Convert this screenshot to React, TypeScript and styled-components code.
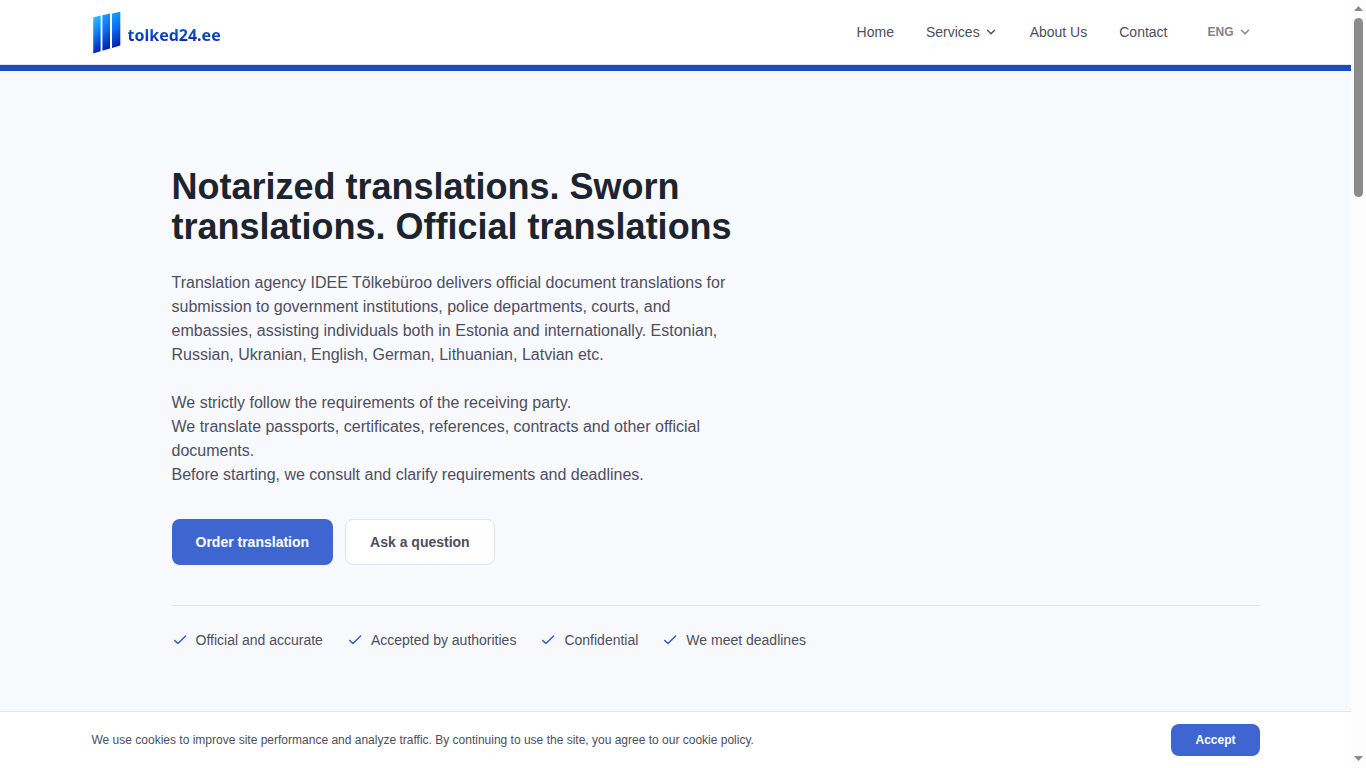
import React from "react";
import styled, { createGlobalStyle, css } from "styled-components";

const GlobalStyle = createGlobalStyle`
  *, *::before, *::after { box-sizing: border-box; }
  body {
    margin: 0;
    background: #f8f9fd;
    color: #4e4e5d;
    font-family: "Liberation Sans", Arial, sans-serif;
    font-size: 16px;
    line-height: 24px;
  }
  h1, p, ul { margin: 0; padding: 0; }
  ul { list-style: none; }
  a { color: inherit; text-decoration: none; }
  button { font-family: inherit; cursor: pointer; }
`;

const Viewport = styled.div`
  display: grid;
  grid-template-columns: minmax(0, 1fr) 15px;
  height: 100vh;
  overflow: hidden;
`;

const Page = styled.div`
  display: flex;
  flex-direction: column;
  min-height: 0;
`;

const Container = styled.div`
  width: 100%;
  max-width: 1200px;
  margin: 0 auto;
  padding: 0 16px;
`;

const Header = styled.header`
  flex: none;
  background: #fff;
  border-bottom: 6px solid #1e4bbf;
`;

const HeaderInner = styled.div`
  border-bottom: 1px solid #e1e3ec;
`;

const HeaderRow = styled(Container)`
  display: flex;
  align-items: center;
  justify-content: space-between;
  height: 64px;
`;

const Logo = styled.a`
  display: flex;
  align-items: center;
  gap: 6px;
`;

const LogoText = styled.span`
  font-family: "Noto Sans", sans-serif;
  font-size: 16px;
  line-height: 24px;
  font-weight: 700;
  padding-top: 6px;
  color: transparent;
  background: linear-gradient(#0e62e2 35%, #0828a4 85%);
  background-clip: text;
`;

const Nav = styled.nav`
  display: flex;
  align-items: center;
  gap: 32px;
  font-size: 14px;
  line-height: 20px;
`;

const navItem = css`
  display: flex;
  align-items: center;
  padding: 0;
  border: 0;
  background: none;
  color: inherit;
`;

const NavLink = styled.a`
  ${navItem}
`;

const NavButton = styled.button`
  ${navItem}
  gap: 4px;
  font-size: 14px;
  line-height: 20px;
`;

const LanguageButton = styled.button`
  ${navItem}
  gap: 4px;
  padding: 0 8px;
  color: #808290;
  font-size: 12px;
  line-height: 16px;
  font-weight: 700;
`;

const Hero = styled.main`
  flex: 1;
  min-height: 0;
  overflow: hidden;
  padding: 96px 0;
`;

const HeroContent = styled.div`
  padding-left: 80px;
`;

const Title = styled.h1`
  max-width: 576px;
  color: #1c2430;
  font-size: 36px;
  line-height: 40px;
  font-weight: 700;
`;

const Lead = styled.p`
  max-width: 576px;
  margin-top: 24px;
`;

const Actions = styled.div`
  display: flex;
  gap: 12px;
  margin-top: 32px;
`;

const Button = styled.button<{ $variant: "primary" | "outline"; $small?: boolean }>`
  padding: ${(p) => (p.$small ? "8px 24px" : p.$variant === "outline" ? "12px 24px" : "13px 24px")};
  border: ${(p) => (p.$variant === "outline" ? "1px solid #e1e3ec" : "0")};
  border-radius: 8px;
  background: ${(p) => (p.$variant === "outline" ? "#fff" : "#3f66d0")};
  color: ${(p) => (p.$variant === "outline" ? "#4e4e5d" : "#fff")};
  font-size: ${(p) => (p.$small ? 12 : 14)}px;
  line-height: ${(p) => (p.$small ? 16 : 20)}px;
  font-weight: 700;
`;

const Benefits = styled.ul`
  display: flex;
  gap: 24px;
  margin-top: 40px;
  padding-top: 24px;
  border-top: 1px solid #e1e3ec;
  font-size: 14px;
  line-height: 20px;
`;

const Benefit = styled.li`
  display: flex;
  align-items: center;
  gap: 8px;
`;

const CookieBar = styled.aside`
  flex: none;
  background: #fff;
  border-top: 1px solid #e1e3ec;
`;

const CookieRow = styled(Container)`
  display: flex;
  align-items: center;
  justify-content: space-between;
  padding-top: 12px;
  padding-bottom: 12px;
  font-size: 12px;
  line-height: 16px;
`;

const ScrollTrack = styled.div`
  display: flex;
  flex-direction: column;
  align-items: center;
  justify-content: space-between;
  background: #fcfcfc;
`;

const ScrollUpper = styled.div`
  display: flex;
  flex-direction: column;
  align-items: center;
  height: 197px;
`;

const ScrollArrow = styled.svg`
  display: block;
  flex: none;
  width: 15px;
  height: 18px;
  fill: #8b8b8b;
`;

const ScrollThumb = styled.div`
  flex: 1;
  width: 9px;
  border-radius: 5px;
  background: #8b8b8b;
`;

const LogoMark = () => (
  <svg width="30" height="44" viewBox="0 0 30 44" aria-hidden="true">
    <defs>
      <linearGradient id="bar1" x1="0" y1="0" x2="0.2" y2="1">
        <stop offset="0" stopColor="#3cc4ff" />
        <stop offset="0.5" stopColor="#0c84f6" />
        <stop offset="1" stopColor="#042cb2" />
      </linearGradient>
      <linearGradient id="bar2" x1="0" y1="0" x2="0.2" y2="1">
        <stop offset="0" stopColor="#18a6ff" />
        <stop offset="0.5" stopColor="#0870f2" />
        <stop offset="1" stopColor="#0326ae" />
      </linearGradient>
    </defs>
    <path d="M1.2 7.4 8.6 5.6V41.2L1.2 43.4Z" fill="url(#bar1)" />
    <path d="M10.4 5.2 18 3.4V38.5L10.4 40.8Z" fill="url(#bar2)" />
    <path d="M20 3.4 28.3 1.8V35.5L20 38Z" fill="url(#bar2)" />
  </svg>
);

const Chevron = () => (
  <svg
    width="14"
    height="14"
    viewBox="0 0 14 14"
    fill="none"
    stroke="currentColor"
    strokeWidth="1.4"
    strokeLinecap="round"
    strokeLinejoin="round"
    aria-hidden="true"
  >
    <path d="M3.5 5.3 7 8.8l3.5-3.5" />
  </svg>
);

const Check = () => (
  <svg
    width="16"
    height="16"
    viewBox="0 0 16 16"
    fill="none"
    stroke="#2a58d2"
    strokeWidth="1.4"
    strokeLinecap="round"
    strokeLinejoin="round"
    aria-hidden="true"
  >
    <path d="M2.7 8.4 6 11.6l7.6-7.6" />
  </svg>
);

const benefits = ["Official and accurate", "Accepted by authorities", "Confidential", "We meet deadlines"];

export default function App() {
  return (
    <>
      <GlobalStyle />
      <Viewport>
        <Page>
          <Header>
            <HeaderInner>
              <HeaderRow>
                <Logo href="#">
                  <LogoMark />
                  <LogoText>tolked24.ee</LogoText>
                </Logo>
                <Nav>
                  <NavLink href="#">Home</NavLink>
                  <NavButton type="button">
                    Services
                    <Chevron />
                  </NavButton>
                  <NavLink href="#about">About Us</NavLink>
                  <NavLink href="#contact">Contact</NavLink>
                  <LanguageButton type="button">
                    ENG
                    <Chevron />
                  </LanguageButton>
                </Nav>
              </HeaderRow>
            </HeaderInner>
          </Header>
          <Hero>
            <Container>
              <HeroContent>
                <Title>Notarized translations. Sworn translations. Official translations</Title>
                <Lead>
                  Translation agency IDEE Tõlkebüroo delivers official document translations for submission to
                  government institutions, police departments, courts, and embassies, assisting individuals both in
                  Estonia and internationally. Estonian, Russian, Ukranian, English, German, Lithuanian, Latvian etc.
                </Lead>
                <Lead>
                  We strictly follow the requirements of the receiving party.
                  <br />
                  We translate passports, certificates, references, contracts and other official documents.
                  <br />
                  Before starting, we consult and clarify requirements and deadlines.
                </Lead>
                <Actions>
                  <Button type="button" $variant="primary">
                    Order translation
                  </Button>
                  <Button type="button" $variant="outline">
                    Ask a question
                  </Button>
                </Actions>
                <Benefits>
                  {benefits.map((text) => (
                    <Benefit key={text}>
                      <Check />
                      {text}
                    </Benefit>
                  ))}
                </Benefits>
              </HeroContent>
            </Container>
          </Hero>
          <CookieBar>
            <CookieRow>
              <p>
                We use cookies to improve site performance and analyze traffic. By continuing to use the site, you
                agree to our cookie policy.
              </p>
              <Button type="button" $variant="primary" $small>
                Accept
              </Button>
            </CookieRow>
          </CookieBar>
        </Page>
        <ScrollTrack aria-hidden="true">
          <ScrollUpper>
            <ScrollArrow viewBox="0 0 15 18">
              <path d="M7.5 6 12 11H3Z" />
            </ScrollArrow>
            <ScrollThumb />
          </ScrollUpper>
          <ScrollArrow viewBox="0 0 15 18">
            <path d="M3 6H12L7.5 11Z" />
          </ScrollArrow>
        </ScrollTrack>
      </Viewport>
    </>
  );
}
